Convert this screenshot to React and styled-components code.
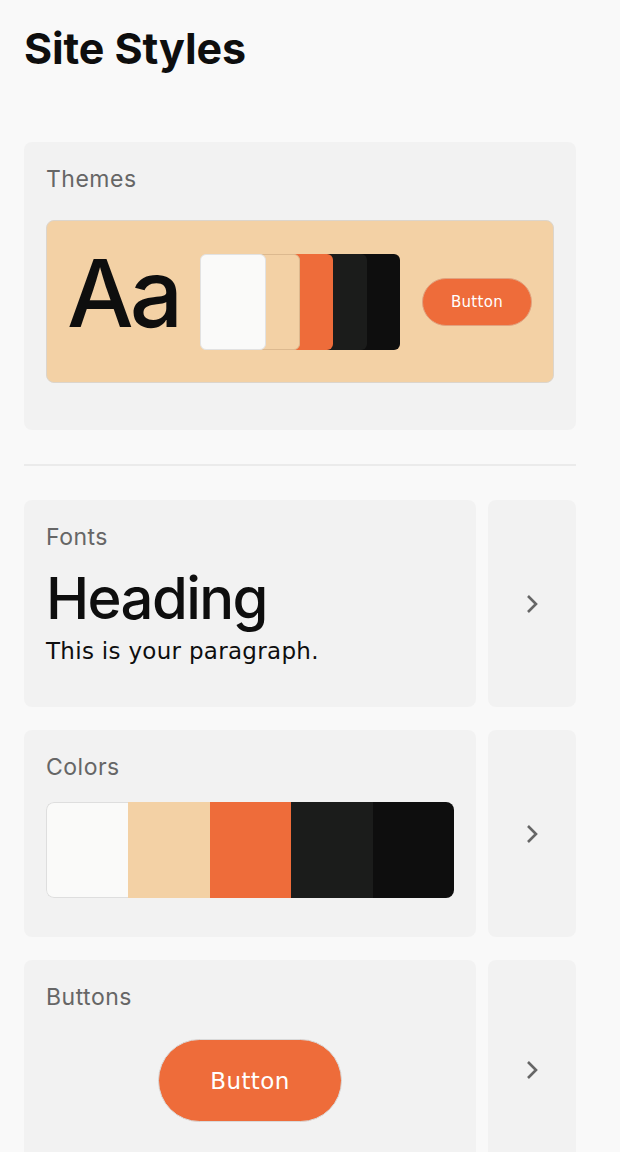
import React from "react";
import styled, { createGlobalStyle } from "styled-components";

const Global = createGlobalStyle`
  html, body { margin: 0; padding: 0; background: #f9f9f9; }
  body { font-family: Inter, "Liberation Sans", sans-serif; color: #0e0e0e; }
`;

const Page = styled.div`
  width: 552px;
  padding: 23px 24px 0;
  display: flex;
  flex-direction: column;
`;

const Title = styled.h1`
  margin: 0 0 69px;
  font-size: 43px;
  line-height: 50px;
  font-weight: 700;
  letter-spacing: -0.1px;
`;

const Card = styled.section`
  background: #f2f2f2;
  border-radius: 8px;
  padding: ${(p) => p.$pad || "23px 22px"};
  display: flex;
  flex-direction: column;
  flex: 1;
  min-width: 0;
`;

const Label = styled.div`
  font-size: 23px;
  line-height: 28px;
  color: #666;
  letter-spacing: 0.5px;
  margin-bottom: ${(p) => p.$gap || "27px"};
`;

const Preview = styled.div`
  background: #f3d1a5;
  border: 1px solid #dcd5cc;
  border-radius: 8px;
  height: 161px;
  display: flex;
  align-items: center;
  padding: 0 21px 0 20px;
`;

const Aa = styled.div`
  font-size: 94px;
  line-height: 1;
  font-weight: 500;
  letter-spacing: -4px;
  width: 133px;
  flex: none;
  margin-top: -18px;
`;

const Stack = styled.div`
  display: flex;
  height: 96px;
`;

const StackCard = styled.div`
  width: 66px;
  height: 96px;
  border-radius: 6px;
  background: ${(p) => p.$c};
  box-sizing: border-box;
  border: 1px solid ${(p) => p.$b || "transparent"};
  margin-left: ${(p) => (p.$first ? "0" : "-32.5px")};
  position: relative;
  z-index: ${(p) => p.$z};
`;

const ThemeButton = styled.div`
  margin-left: auto;
  width: 110px;
  height: 48px;
  box-sizing: border-box;
  border-radius: 24px;
  background: #ee6c3a;
  border: 1px solid #e1a27f;
  color: #fff;
  font-family: "DejaVu Sans", Inter, sans-serif;
  font-size: 15px;
  letter-spacing: 0.3px;
  display: flex;
  align-items: center;
  justify-content: center;
`;

const Divider = styled.hr`
  border: 0;
  border-top: 2px solid #ebebeb;
  margin: 34px 0 34px;
`;

const Row = styled.div`
  display: flex;
  gap: 12px;
  margin-bottom: 23px;
  height: ${(p) => p.$h || "207px"};
`;

const Side = styled.div`
  width: 88px;
  flex: none;
  background: #f2f2f2;
  border-radius: 8px;
  display: flex;
  align-items: center;
  justify-content: center;
`;

const Heading = styled.div`
  font-size: 58px;
  line-height: 62px;
  font-weight: 500;
  letter-spacing: -1.6px;
`;

const Para = styled.div`
  font-family: "DejaVu Sans", Inter, sans-serif;
  font-size: 23px;
  line-height: 28px;
  margin-top: 8px;
  letter-spacing: 0.3px;
`;

const Bar = styled.div`
  display: flex;
  height: 96px;
  width: 408px;
  border-radius: 8px;
  overflow: hidden;
`;

const Seg = styled.div`
  flex: 1;
  background: ${(p) => p.$c};
  box-sizing: border-box;
  border: ${(p) => (p.$b ? "1px solid #dedede" : "none")};
  border-right: none;
  border-radius: ${(p) => (p.$b ? "8px 0 0 8px" : "0")};
`;

const BigButton = styled.div`
  align-self: center;
  width: 184px;
  height: 83px;
  box-sizing: border-box;
  border-radius: 42px;
  background: #ee6c3a;
  border: 1px solid #d9d9d9;
  color: #fff;
  font-family: "DejaVu Sans", Inter, sans-serif;
  font-size: 23px;
  letter-spacing: 0.4px;
  display: flex;
  align-items: center;
  justify-content: center;
`;

const Chevron = () => (
  <svg width="16" height="22" viewBox="0 0 16 22" fill="none">
    <path d="M4 3 L12 11 L4 19" stroke="#666" strokeWidth="2.6" strokeLinecap="butt" strokeLinejoin="miter" />
  </svg>
);

const palette = ["#fafaf9", "#f3d1a5", "#ee6c3a", "#1b1c1b", "#0e0e0e"];

export default function App() {
  return (
    <>
      <Global />
      <Page>
        <Title>Site Styles</Title>
        <Card $pad="23px 22px 47px">
          <Label>Themes</Label>
          <Preview>
            <Aa>Aa</Aa>
            <Stack>
              {palette.map((c, i) => (
                <StackCard
                  key={c}
                  $c={c}
                  $first={i === 0}
                  $z={5 - i}
                  $b={i === 0 ? "#e2e2e2" : i === 1 ? "#dcb98f" : undefined}
                />
              ))}
            </Stack>
            <ThemeButton>Button</ThemeButton>
          </Preview>
        </Card>
        <Divider />
        <Row>
          <Card>
            <Label $gap="16px">Fonts</Label>
            <Heading>Heading</Heading>
            <Para>This is your paragraph.</Para>
          </Card>
          <Side><Chevron /></Side>
        </Row>
        <Row>
          <Card>
            <Label $gap="21px">Colors</Label>
            <Bar>
              {palette.map((c, i) => (
                <Seg key={c} $c={c} $b={i === 0} />
              ))}
            </Bar>
          </Card>
          <Side><Chevron /></Side>
        </Row>
        <Row $h="220px">
          <Card>
            <Label $gap="28px">Buttons</Label>
            <BigButton>Button</BigButton>
          </Card>
          <Side><Chevron /></Side>
        </Row>
      </Page>
    </>
  );
}
